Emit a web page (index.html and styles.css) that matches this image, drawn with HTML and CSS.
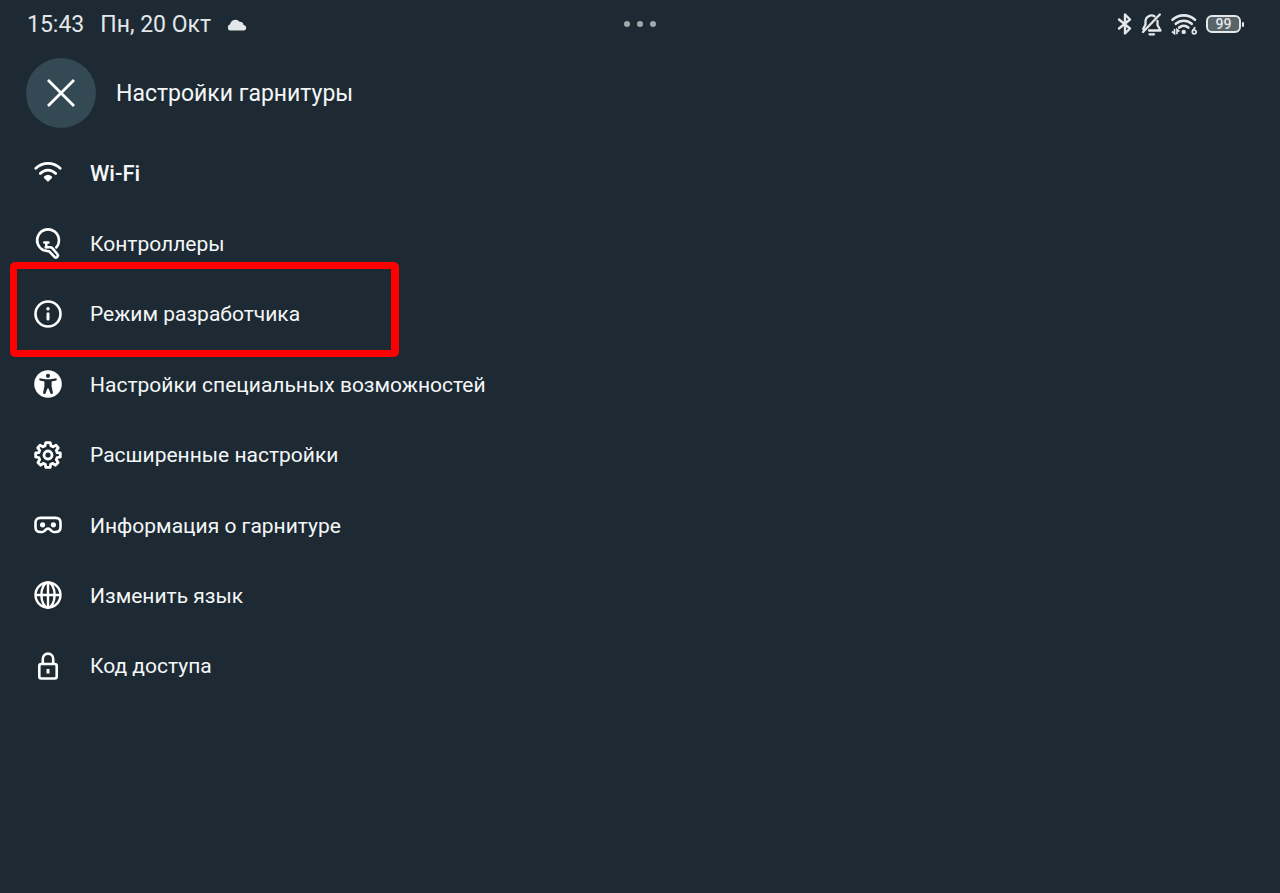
FILE: index.html
```html
<!DOCTYPE html>
<html lang="ru">
<head>
<meta charset="utf-8">
<meta name="viewport" content="width=device-width, initial-scale=1">
<title>Настройки гарнитуры</title>
<link rel="stylesheet" href="styles.css">
</head>
<body>
<div class="status-bar">
  <div class="status-left">
    <span>15:43</span>
    <span>Пн, 20 Окт</span>
    <svg class="cloud" width="20" height="12" viewBox="0 0 20 12" fill="currentColor"><path d="M3.200 11.500A3.200 3.200 0 0 1 3.200 5.300A5.300 5.300 0 0 1 12.600 2.800A4 4 0 0 1 16.600 6A2.800 2.800 0 0 1 17.200 11.500Z"/></svg>
  </div>
  <div class="status-dots"><i class="dot"></i><i class="dot"></i><i class="dot"></i></div>
  <div class="status-right">
    <svg width="16" height="24" viewBox="0 0 16 24" fill="none" stroke="currentColor" stroke-width="2.400" stroke-linejoin="round" stroke-linecap="round"><path d="M3 7.500L14 16.500L9 21.500V2.500L14 7.500L3 16.500"/></svg>
    <svg width="22" height="24" viewBox="0 0 22 24" fill="none" stroke="currentColor" stroke-width="2.300" stroke-linecap="round" stroke-linejoin="round"><path d="M14.500 4.300A6 6 0 0 0 5.500 9V12.500L3.200 17M17.500 9V13L20.500 18.500H9M19.800 2.500L3 20"/><path d="M9.500 22.300H14"/></svg>
    <svg width="28" height="24" viewBox="0 0 28 24" fill="none" stroke="currentColor" stroke-width="2.600" stroke-linecap="round"><path d="M2.500 7.800A16.500 16.500 0 0 1 25 7.800M5.800 11.800A12 12 0 0 1 21.700 11.800M9.200 15.600A7 7 0 0 1 18.300 15.600"/><circle cx="13.700" cy="19.900" r="2.200" fill="currentColor" stroke="none"/><g stroke-width="1.700"><path d="M4.500 17.500V21.500L2.500 20M7 21.500V17.500L8.800 19"/><path d="M24.700 15.700L22.600 18.800"/><circle cx="24.200" cy="19.900" r="1.900"/></g></svg>
    <span class="battery"><span class="battery-level">99</span></span>
  </div>
</div>

<header class="header">
  <button class="close" type="button" aria-label="Закрыть">
    <svg width="32" height="32" viewBox="0 0 32 32" fill="none" stroke="currentColor" stroke-width="2.800"><path d="M3 3L29 29M29 3L3 29"/></svg>
  </button>
  <h1 class="title">Настройки гарнитуры</h1>
</header>

<nav class="menu">
  <a class="item item-strong" href="#">
    <svg class="icon" viewBox="0 0 28 28" fill="none" stroke="currentColor" stroke-width="2.800" stroke-linecap="round"><path d="M1.800 9.300C8.800 2.800 19.200 2.800 26.200 9.300M6.300 14.500C10.800 10 17.200 10 21.700 14.500"/><path d="M10.800 18.300C12.700 16.500 15.300 16.500 17.200 18.300L14 21.500Z" fill="currentColor" stroke-width="2" stroke-linejoin="round"/></svg>
    <span>Wi-Fi</span>
  </a>
  <a class="item" href="#">
    <svg class="icon" viewBox="0 0 28 28" fill="none" stroke="currentColor" stroke-width="2.600" stroke-linecap="round" stroke-linejoin="round"><path d="M9.500 20.200A10.900 10.900 0 1 1 22.300 17.400"/><path d="M10.200 12.500H14.500M12.300 12.800V17.300" stroke-width="2.400"/><path d="M11.700 17.300H16.300Q17.500 17.300 18.300 18.200L23.300 24A2 2 0 0 1 20.200 26.700L15.500 21.600L11 20.500"/></svg>
    <span>Контроллеры</span>
  </a>
  <a class="item item-marked" href="#">
    <svg class="icon" viewBox="0 0 28 28" fill="none" stroke="currentColor"><circle cx="14" cy="14" r="12.500" stroke-width="2.600"/><path d="M14 13.700V19" stroke-width="3" stroke-linecap="round"/><circle cx="14" cy="8.800" r="1.700" fill="currentColor" stroke="none"/></svg>
    <span>Режим разработчика</span>
  </a>
  <a class="item" href="#">
    <svg class="icon" viewBox="0 0 28 28"><circle cx="14" cy="14" r="13.800" fill="currentColor"/><circle class="cutout" cx="14" cy="5.800" r="2.100"/><path class="cutout" d="M5.600 8.300L11.500 9.200H16.500L22.400 8.300Q23.300 9.500 22.300 10.500L17.600 11.500V16L19 23.300Q17.800 24.500 16.500 23.500L14.600 18.500H13.400L11.500 23.500Q10.200 24.500 9 23.300L10.400 16V11.500L5.700 10.500Q4.700 9.500 5.600 8.300Z"/></svg>
    <span>Настройки специальных возможностей</span>
  </a>
  <a class="item" href="#">
    <svg class="icon" viewBox="0 0 28 28" fill="none" stroke="currentColor" stroke-width="2.800" stroke-linejoin="round"><path d="M11.800 1.700H16.200L17 4.900L19.200 5.800L22 4.100L24.300 6.800L22.300 9.400L23.200 11.600L26.300 12V16L23.200 16.600L22.300 18.800L24.100 21.500L21.300 24.200L18.800 22.400L16.700 23.300L16.200 26.300H11.800L11.300 23.300L9.200 22.400L6.700 24.200L3.900 21.500L5.700 18.800L4.800 16.600L1.700 16V12L4.800 11.600L5.700 9.400L3.700 6.800L6 4.100L8.800 5.800L11 4.900Z"/><circle cx="14" cy="14" r="4"/></svg>
    <span>Расширенные настройки</span>
  </a>
  <a class="item" href="#">
    <svg class="icon" viewBox="0 0 28 28" fill="none" stroke="currentColor" stroke-width="2.600" stroke-linejoin="round"><path d="M6.500 6.900H21.500Q26.500 6.900 26.500 11.600V16.300Q26.500 21 21.500 21H19.800Q18.500 21 17.600 20L15.800 18.300Q14 16.800 12.200 18.300L10.400 20Q9.500 21 8.200 21H6.500Q1.500 21 1.500 16.300V11.600Q1.500 6.900 6.500 6.900Z"/><circle cx="8.600" cy="13.800" r="2.600" fill="currentColor" stroke="none"/><circle cx="19.400" cy="13.800" r="2.600" fill="currentColor" stroke="none"/></svg>
    <span>Информация о гарнитуре</span>
  </a>
  <a class="item" href="#">
    <svg class="icon" viewBox="0 0 28 28" fill="none" stroke="currentColor" stroke-width="2.400"><circle cx="14" cy="14" r="12.500"/><ellipse cx="14" cy="14" rx="6.600" ry="12.500"/><path d="M14 1.500V26.500M1.500 14H26.500"/></svg>
    <span>Изменить язык</span>
  </a>
  <a class="item" href="#">
    <svg class="icon" viewBox="0 0 28 28" fill="none" stroke="currentColor" stroke-width="2.600"><rect x="5.300" y="12" width="17.400" height="14.500" rx="2"/><path d="M8.800 12V6.800A5.200 5.200 0 0 1 19.200 6.800V12"/><path d="M14 17V21.500" stroke-width="3"/></svg>
    <span>Код доступа</span>
  </a>
</nav>
</body>
</html>
```
FILE: styles.css
```css
*,
*::before,
*::after {
  box-sizing: border-box;
}

body {
  margin: 0;
  min-height: 100vh;
  background: #1e2a33;
  color: #f4f7f8;
  font-family: Roboto, "Noto Sans", sans-serif;
  font-size: 21px;
  line-height: 28px;
}

svg {
  display: block;
  flex: none;
}

.status-bar {
  display: grid;
  grid-template-columns: 1fr auto 1fr;
  align-items: center;
  height: 48px;
  padding: 0 36px 0 27px;
  color: #e3e7e9;
  font-size: 23px;
}

.status-left,
.status-right,
.status-dots {
  display: flex;
  align-items: center;
}

.status-left {
  gap: 16px;
  padding-top: 2px;
}

.status-right {
  justify-content: flex-end;
  gap: 8px;
}

.status-dots {
  gap: 7px;
  padding-left: 9px;
}

.dot {
  width: 6px;
  height: 6px;
  border-radius: 50%;
  background: #a0a8ac;
}

.battery {
  display: flex;
  align-items: center;
}

.battery::after {
  content: "";
  width: 2px;
  height: 5px;
  margin-left: 1px;
  border-radius: 1px;
  background: currentColor;
}

.battery-level {
  width: 35px;
  height: 18px;
  border: 2px solid currentColor;
  border-radius: 6px;
  background: #59636a;
  font-size: 14px;
  font-weight: 500;
  line-height: 14px;
  text-align: center;
}

.header {
  display: flex;
  align-items: center;
  gap: 20px;
  padding: 10px 26px;
}

.close {
  display: grid;
  place-items: center;
  width: 70px;
  height: 70px;
  padding: 0;
  border: 0;
  border-radius: 50%;
  background: #334954;
  color: #fff;
}

.title {
  margin: 0;
  padding-top: 2px;
  font-size: 23px;
  font-weight: 400;
}

.menu {
  display: grid;
  grid-auto-rows: 1fr;
  min-height: 563px;
}

.item {
  position: relative;
  display: flex;
  align-items: center;
  gap: 28px;
  padding: 0 34px;
  color: inherit;
  text-decoration: none;
}

.item span {
  padding-top: 1px;
}

.item-strong {
  font-size: 22px;
  font-weight: 500;
}

.icon {
  width: 28px;
  height: 28px;
  overflow: visible;
  color: #fff;
}

.cutout {
  fill: #1e2a33;
}

.item-marked::after {
  content: "";
  position: absolute;
  top: -17px;
  bottom: -8px;
  left: 10px;
  width: 389px;
  border: 7px solid #fe0000;
  border-right-width: 8px;
  border-radius: 5px;
  pointer-events: none;
}
```
